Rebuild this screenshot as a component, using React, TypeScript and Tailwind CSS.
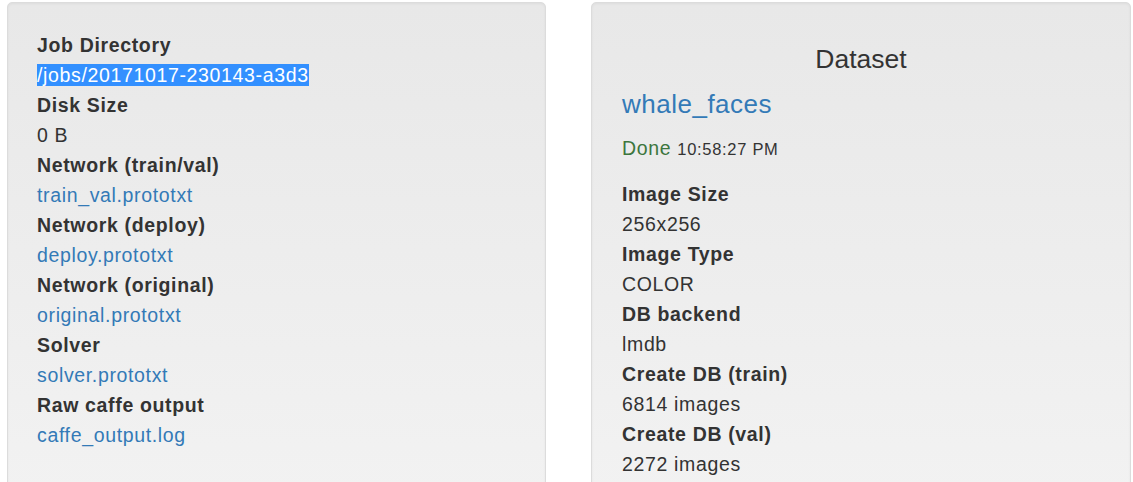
import React from "react";

const font = { fontFamily: '"Liberation Sans", Arial, sans-serif' };

function Row({ label, children }: { label: string; children: React.ReactNode }) {
  return (
    <>
      <dt className="font-bold">{label}</dt>
      <dd>{children}</dd>
    </>
  );
}

function Link({ children }: { children: React.ReactNode }) {
  return <a className="text-[#337ab7] cursor-pointer">{children}</a>;
}

function Well({ children, className }: { children: React.ReactNode; className: string }) {
  return (
    <div
      className={
        "h-[640px] rounded-[5px] border border-[#dcdcdc] bg-gradient-to-b from-[#e8e8e8] to-[#f5f5f5] shadow-[inset_0_1px_3px_rgba(0,0,0,0.05)] " +
        className
      }
    >
      {children}
    </div>
  );
}

export default function App() {
  return (
    <div
      className="h-[482px] w-[1133px] overflow-hidden bg-white text-[19.5px] leading-[30px] tracking-[0.65px] text-[#333]"
      style={font}
    >
      <div className="flex gap-[45px] pl-[7px] pr-[2px] pt-[2px]">
        <Well className="w-[539px] pl-[29px] pt-[27px]">
          <dl>
            <Row label="Job Directory">
              <span className="bg-[#3390ff] text-white leading-[22px]">/jobs/20171017-230143-a3d3</span>
            </Row>
            <Row label="Disk Size">0 B</Row>
            <Row label="Network (train/val)">
              <Link>train_val.prototxt</Link>
            </Row>
            <Row label="Network (deploy)">
              <Link>deploy.prototxt</Link>
            </Row>
            <Row label="Network (original)">
              <Link>original.prototxt</Link>
            </Row>
            <Row label="Solver">
              <Link>solver.prototxt</Link>
            </Row>
            <Row label="Raw caffe output">
              <Link>caffe_output.log</Link>
            </Row>
          </dl>
        </Well>
        <Well className="w-[540px] pl-[30px] pr-[30px] pt-[41px]">
          <h4 className="text-center text-[26.5px] leading-[30px] tracking-normal">Dataset</h4>
          <h4 className="mt-[15px] text-[26px] leading-[30px] tracking-[0.5px]">
            <Link>whale_faces</Link>
          </h4>
          <div className="mt-[14px]">
            <span className="text-[#3c763d]">Done</span>{" "}
            <small className="text-[16.5px] tracking-[0.7px]">10:58:27 PM</small>
          </div>
          <dl className="mt-[15px]">
            <Row label="Image Size">256x256</Row>
            <Row label="Image Type">COLOR</Row>
            <Row label="DB backend">lmdb</Row>
            <Row label="Create DB (train)">6814 images</Row>
            <Row label="Create DB (val)">2272 images</Row>
          </dl>
        </Well>
      </div>
    </div>
  );
}
